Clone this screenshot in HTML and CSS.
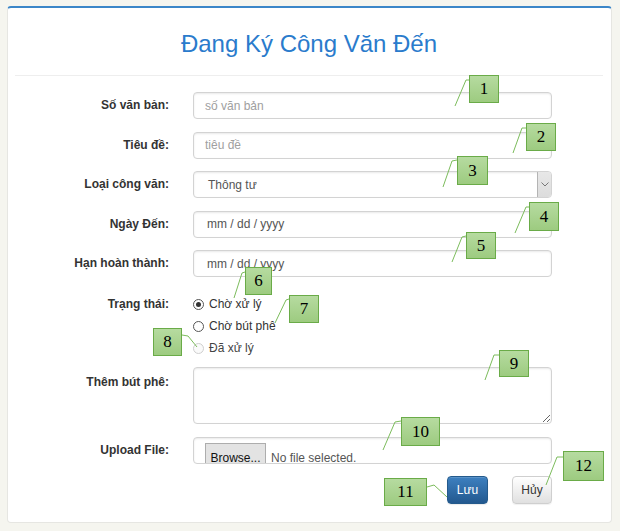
FILE: index.html
```html
<!DOCTYPE html>
<html lang="vi">
<head>
<meta charset="utf-8">
<title>Đang Ký Công Văn Đến</title>
<link rel="stylesheet" href="styles.css">
</head>
<body>
<div class="card">
  <div class="head"><h1 class="title">Đang Ký Công Văn Đến</h1></div>
  <form class="form">
    <div class="row">
      <label class="lbl">Số văn bản:</label>
      <input class="ctl" type="text" placeholder="số văn bản">
    </div>
    <div class="row">
      <label class="lbl">Tiêu đề:</label>
      <input class="ctl" type="text" placeholder="tiêu đề">
    </div>
    <div class="row">
      <label class="lbl">Loại công văn:</label>
      <div class="ctl sel"><span class="sel-text">Thông tư</span><span class="sel-btn"><svg width="8" height="5" viewBox="0 0 8 5"><polyline points="0.5,0.5 4,4 7.5,0.5" fill="none" stroke="#777" stroke-width="1"/></svg></span></div>
    </div>
    <div class="row">
      <label class="lbl">Ngày Đến:</label>
      <input class="ctl date" type="text" value="mm / dd / yyyy">
    </div>
    <div class="row">
      <label class="lbl">Hạn hoàn thành:</label>
      <input class="ctl date" type="text" value="mm / dd / yyyy">
    </div>
    <div class="row radios-row">
      <label class="lbl lbl-r">Trạng thái:</label>
      <div class="radios">
        <div class="radio"><span class="dot on"></span><span>Chờ xử lý</span></div>
        <div class="radio"><span class="dot"></span><span>Chờ bút phê</span></div>
        <div class="radio dis"><span class="dot"></span><span>Đã xử lý</span></div>
      </div>
    </div>
    <div class="row ta-row">
      <label class="lbl">Thêm bút phê:</label>
      <textarea class="ctl ta"></textarea>
    </div>
    <div class="row file-row">
      <label class="lbl">Upload File:</label>
      <div class="ctl file"><span class="browse">Browse...</span><span class="nofile">No file selected.</span></div>
    </div>
    <div class="actions">
      <button type="button" class="btn save">Lưu</button>
      <button type="button" class="btn cancel">Hủy</button>
    </div>
  </form>
</div>

<svg class="lines" width="620" height="531" viewBox="0 0 620 531">
  <g fill="none" stroke="#7cbc5c" stroke-width="1">
    <polyline points="455,106 466,80 469,80"/>
    <polyline points="513,153 522,128 526,128"/>
    <polyline points="443,187 452,161 457,160"/>
    <polyline points="515,233 526,207 529,207"/>
    <polyline points="452,262 462,237 466,236"/>
    <polyline points="234,298 242,273 245,272"/>
    <polyline points="275,323 286,300 289,299"/>
    <polyline points="182,335 188,336 197,347"/>
    <polyline points="485,380 494,355 499,355"/>
    <polyline points="383,450 395,422 401,421"/>
    <polyline points="427,487 434,485 447,497"/>
    <polyline points="546,485 557,457 563,457"/>
  </g>
</svg>
<div class="tag t1">1</div>
<div class="tag t2">2</div>
<div class="tag t3">3</div>
<div class="tag t4">4</div>
<div class="tag t5">5</div>
<div class="tag t6">6</div>
<div class="tag t7">7</div>
<div class="tag t8">8</div>
<div class="tag t9">9</div>
<div class="tag t10">10</div>
<div class="tag t11">11</div>
<div class="tag t12">12</div>
</body>
</html>
```
FILE: styles.css
```css
* { box-sizing: border-box; }
html, body { margin: 0; padding: 0; }
body {
  background: #f5f5ef;
  font-family: "Liberation Sans", Arial, sans-serif;
  font-size: 12px;
  color: #333;
  width: 620px;
  height: 531px;
  position: relative;
  overflow: hidden;
}
.card {
  margin: 6px 0 0 7px;
  width: 605px;
  height: 517px;
  background: #fff;
  border: 1px solid #e6e6e2;
  border-top: 2px solid #3b86c8;
  border-radius: 4px;
}
.head {
  margin: 0 8px 0 7px;
  padding: 22px 0 17px;
  border-bottom: 1px solid #eeeeee;
}
.title {
  margin: 0;
  text-align: center;
  font-weight: normal;
  font-size: 24px;
  line-height: 28px;
  color: #2a7bcc;
}
.form {
  padding-top: 16px;
}
.row {
  display: flex;
  align-items: flex-start;
  gap: 24px;
  margin-bottom: 12.5px;
}
.lbl {
  width: 161px;
  text-align: right;
  font-weight: bold;
  line-height: 27px;
  color: #333;
}
.ctl {
  width: 359px;
  height: 27px;
  border: 1px solid #d3d3d3;
  border-radius: 4px;
  box-shadow: inset 0 1px 2px rgba(0,0,0,0.09);
  background: #fff;
  font-family: "Liberation Sans", Arial, sans-serif;
  font-size: 12px;
  color: #555;
  padding: 0 11px;
  margin: 0;
  outline: none;
}
.ctl::placeholder { color: #a0a0a0; }
.date { padding-left: 13px; }
.sel {
  display: flex;
  align-items: center;
  justify-content: space-between;
  padding: 0 0 0 14px;
}
.sel-text { color: #555; }
.sel-btn {
  width: 14px;
  height: 25px;
  background: linear-gradient(#e8e8e8, #dcdcdc);
  border-left: 1px solid #b4b4b4;
  border-radius: 0 3px 3px 0;
  display: flex;
  align-items: center;
  justify-content: center;
}
.radios-row { padding-top: 3.5px; margin-bottom: 8px; }
.lbl-r { line-height: 22px; }
.radios { display: flex; flex-direction: column; }
.radio {
  height: 22px;
  display: flex;
  align-items: center;
  gap: 5px;
  color: #333;
}
.dot {
  width: 11px;
  height: 11px;
  border: 1px solid #555;
  border-radius: 50%;
  background: #fff;
  display: flex;
  align-items: center;
  justify-content: center;
}
.dot.on::after {
  content: "";
  width: 5px;
  height: 5px;
  border-radius: 50%;
  background: #333;
}
.radio.dis .dot { border-color: #cfcfcf; background: #fafafa; }
.radio.dis { color: #444; }
.ta-row .lbl { padding-top: 2px; }
.ta {
  height: 57px;
  resize: vertical;
  display: block;
}
.ta-row { margin-bottom: 13px; }
.file {
  display: flex;
  align-items: flex-start;
  gap: 5px;
  padding: 5px 11px 0;
  overflow: hidden;
}
.browse {
  flex: none;
  width: 61px;
  height: 26px;
  padding-top: 7px;
  text-align: center;
  background: #e3e3e3;
  border: 1px solid #adadad;
  color: #111;
}
.nofile { padding-top: 8px; color: #555; }
.file-row { margin-bottom: 12px; }
.actions {
  display: flex;
  justify-content: flex-end;
  gap: 24px;
  width: 544px;
}
.btn {
  height: 28px;
  padding: 0;
  border-radius: 4px;
  font-family: "Liberation Sans", Arial, sans-serif;
  font-size: 12px;
  cursor: pointer;
}
.save {
  width: 41px;
  color: #fff;
  background: linear-gradient(#3d80c0, #23598f);
  border: 1px solid #245a8c;
  box-shadow: inset 0 1px 0 rgba(255,255,255,.15), 0 1px 1px rgba(0,0,0,.08);
}
.cancel {
  width: 40px;
  color: #333;
  background: linear-gradient(#ffffff, #e0e0e0);
  border: 1px solid #cfcfcf;
  box-shadow: 0 1px 1px rgba(0,0,0,.06);
}
.lines {
  position: absolute;
  left: 0;
  top: 0;
  pointer-events: none;
}
.tag {
  position: absolute;
  display: flex;
  align-items: center;
  justify-content: center;
  background: linear-gradient(#b6dba0, #9dcb80);
  border: 1px solid #6aab48;
  font-family: "Liberation Serif", "Times New Roman", serif;
  font-size: 17px;
  color: #000;
}
.t1 { left: 469px; top: 75px; width: 30px; height: 28px; }
.t2 { left: 526px; top: 123px; width: 30px; height: 28px; }
.t3 { left: 457px; top: 156px; width: 31px; height: 29px; }
.t4 { left: 529px; top: 202px; width: 30px; height: 29px; }
.t5 { left: 466px; top: 232px; width: 30px; height: 27px; }
.t6 { left: 245px; top: 267px; width: 27px; height: 28px; }
.t7 { left: 289px; top: 295px; width: 30px; height: 28px; }
.t8 { left: 153px; top: 328px; width: 29px; height: 28px; }
.t9 { left: 499px; top: 350px; width: 30px; height: 27px; }
.t10 { left: 401px; top: 417px; width: 39px; height: 29px; }
.t11 { left: 384px; top: 478px; width: 43px; height: 28px; }
.t12 { left: 563px; top: 451px; width: 41px; height: 30px; }
```
